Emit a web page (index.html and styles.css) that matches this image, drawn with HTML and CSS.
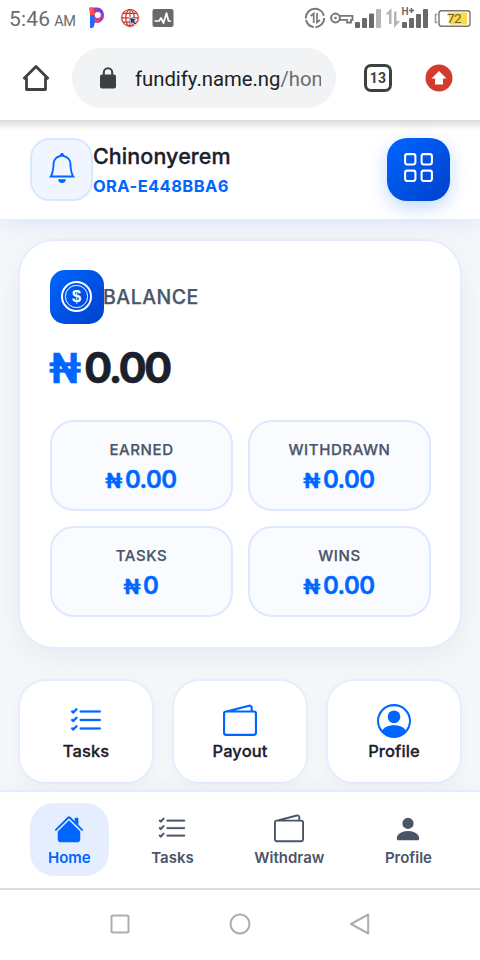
FILE: index.html
```html
<!DOCTYPE html>
<html lang="en">
<head>
<meta charset="utf-8">
<meta name="viewport" content="width=device-width">
<title>Fundify</title>
<link rel="stylesheet" href="styles.css">
</head>
<body>
<svg class="defs" width="0" height="0">
  <symbol id="list" viewBox="0 0 16 16"><path d="M5 11.5a.5.5 0 0 1 .5-.5h9a.5.5 0 0 1 0 1h-9a.5.5 0 0 1-.5-.5zm0-4a.5.5 0 0 1 .5-.5h9a.5.5 0 0 1 0 1h-9a.5.5 0 0 1-.5-.5zm0-4a.5.5 0 0 1 .5-.5h9a.5.5 0 0 1 0 1h-9a.5.5 0 0 1-.5-.5zM3.854 2.146a.5.5 0 0 1 0 .708l-1.5 1.5a.5.5 0 0 1-.708 0l-.5-.5a.5.5 0 1 1 .708-.708L2 3.293l1.146-1.147a.5.5 0 0 1 .708 0zm0 4a.5.5 0 0 1 0 .708l-1.5 1.5a.5.5 0 0 1-.708 0l-.5-.5a.5.5 0 1 1 .708-.708L2 7.293l1.146-1.147a.5.5 0 0 1 .708 0zm0 4a.5.5 0 0 1 0 .708l-1.5 1.5a.5.5 0 0 1-.708 0l-.5-.5a.5.5 0 0 1 .708-.708l.146.147 1.146-1.147a.5.5 0 0 1 .708 0z" stroke="currentColor" stroke-width=".12"/></symbol>
  <symbol id="wallet" viewBox="0 0 16 16"><path d="M12.136.326A1.5 1.5 0 0 1 14 1.78V3h.5A1.5 1.5 0 0 1 16 4.5v9a1.5 1.5 0 0 1-1.5 1.5h-13A1.5 1.5 0 0 1 0 13.5v-9a1.5 1.5 0 0 1 1.432-1.499L12.136.326zM5.562 3H13V1.78a.5.5 0 0 0-.621-.484L5.562 3zM1.5 4a.5.5 0 0 0-.5.5v9a.5.5 0 0 0 .5.5h13a.5.5 0 0 0 .5-.5v-9a.5.5 0 0 0-.5-.5h-13z"/></symbol>
</svg>

<header class="status">
  <span class="time">5:46<small>AM</small></span>
  <svg class="s-p" width="18" height="22" viewBox="0 0 18 22">
    <defs><linearGradient id="pg" x1="0" y1="1" x2="1" y2="0"><stop offset="0" stop-color="#ff5a48"/><stop offset=".45" stop-color="#c83d9a"/><stop offset="1" stop-color="#4a3df5"/></linearGradient></defs>
    <path d="M1 .5h8a8 8 0 0 1 0 15.500H5V8H1z" fill="url(#pg)"/>
    <path d="M0 .5h4l2 7.500H1z" fill="#ff5548"/>
    <path d="M1 8h4.500v9q0 3-2.500 4H1z" fill="#1f6bff"/>
    <circle cx="8.800" cy="8" r="3" fill="#fff"/>
  </svg>
  <svg class="s-globe" width="20" height="20" viewBox="0 0 20 20">
    <circle cx="10" cy="10.500" r="9.300" fill="#fff" stroke="#ddd" stroke-width=".8"/>
    <g fill="none" stroke="#c9352b" stroke-width="1.200"><circle cx="10" cy="9.800" r="8.300"/><ellipse cx="10" cy="9.800" rx="4.200" ry="8.300"/><path d="M10 1.500v16.600M1.700 9.800h16.600M3 5.400h14M3 14.200h14"/></g>
    <path d="M9.500 9l7 2.500-2.300 1.500 2.300 2.500-1.500 1.500-2.300-2.500-1.500 2.300z" fill="#24357c" stroke="#fff" stroke-width=".7"/>
  </svg>
  <svg class="s-wave" width="22" height="18" viewBox="0 0 22 18"><rect x=".5" width="21" height="18" rx="2" fill="#696969"/><path d="M2.500 12H7l2-3 2.500 5L14.500 4l2 8H19" fill="none" stroke="#fff" stroke-width="1.700" stroke-linejoin="round"/></svg>
  <span class="spacer"></span>
  <svg width="176" height="24" viewBox="0 0 176 24">
    <g fill="none" stroke="#777" stroke-width="2">
      <circle cx="11" cy="12" r="9.200" stroke-dasharray="14 1.600 11 1.600 27 2.600"/>
      <path d="M9.700 17V7.500l-3 2.500M13 7v9.500l3-2.500" stroke-width="1.700"/>
      <circle cx="31.500" cy="12" r="4.400"/><path d="M35.300 9.800H48.500v4H47v2.700h-4v-2.700H35.300" stroke-width="1.800"/>
    </g>
    <circle cx="31.500" cy="12" r="1.300" fill="#777"/>
    <g fill="#696969"><rect x="51" y="16" width="5" height="6" rx="1"/><rect x="58" y="12" width="5" height="10" rx="1"/><rect x="65" y="7.500" width="5" height="14.500" rx="1"/></g>
    <rect x="72" y="3" width="5" height="19" rx="1" fill="#b5b5b5"/>
    <path d="M87.500 2v16H85V8.500h-3.500zM90 22V5.500h2.500V15H96z" fill="#b5b5b5"/>
    <text x="97.500" y="9" class="hplus">H</text><path d="M105 4.500h5M107.500 2v5" stroke="#696969" stroke-width="1.600"/>
    <g fill="#696969"><rect x="98" y="16" width="5" height="6" rx="1"/><rect x="105" y="12" width="5" height="10" rx="1"/><rect x="112" y="8" width="5" height="14" rx="1"/><rect x="119" y="3" width="5" height="19" rx="1"/></g>
    <path d="M133.500 8.500h-2v8h2" fill="none" stroke="#999" stroke-width="1.500"/><rect x="135" y="4.700" width="31" height="15.600" rx="2.500" fill="#fff" stroke="#777" stroke-width="1.400"/><path d="M144 6.500h19v12h-17z" fill="#ffda48"/><text x="143" y="16.500" class="batt">72</text>
  </svg>
</header>

<div class="browser">
  <svg class="b-home" width="30" height="30" viewBox="0 0 30 30"><path d="M5.500 14.500V26.500H24.500V14.500M2.500 16L15 3.500 27.500 16" fill="none" stroke="#3c4043" stroke-width="2.800" stroke-linejoin="round"/></svg>
  <div class="url">
    <svg width="16" height="22" viewBox="0 0 16 22"><path d="M3.800 9V5.500a4.200 4.200 0 0 1 8.400 0V9" fill="none" stroke="#3c4043" stroke-width="2"/><rect y="7.500" width="16" height="14" rx="2" fill="#3c4043"/></svg>
    <div class="address">fundify.name.ng<span>/hom</span></div>
  </div>
  <div class="tabs">13</div>
  <svg class="update" width="28" height="28" viewBox="0 0 28 28"><circle cx="14" cy="14" r="13.500" fill="#d33b2d"/><path d="M14 7l7.500 7.500H18V20.500h-8V14.500H6.500z" fill="#fff"/></svg>
</div>

<div class="page">
  <div class="topbar">
    <div class="bell"><svg width="30" height="30" viewBox="0 0 16 16"><path d="M8 16a2 2 0 0 0 2-2H6a2 2 0 0 0 2 2zM8 1.918l-.797.161A4.002 4.002 0 0 0 4 6c0 .628-.134 2.197-.459 3.742-.16.767-.376 1.566-.663 2.258h10.244c-.287-.692-.502-1.490-.663-2.258C12.134 8.197 12 6.628 12 6a4.002 4.002 0 0 0-3.203-3.920L8 1.917zM14.220 12c.223.447.481.801.78 1H1c.299-.199.557-.553.78-1C2.680 10.200 3 6.880 3 6c0-2.420 1.720-4.440 4.005-4.901a1 1 0 1 1 1.990 0A5.002 5.002 0 0 1 13 6c0 .88.32 4.200 1.220 6z"/></svg></div>
    <div class="user"><div class="name">Chinonyerem</div><div class="uid">ORA-E448BBA6</div></div>
    <div class="menu"><svg width="33" height="33" viewBox="0 0 16 16"><g fill="none" stroke="#fff"><rect x="1.500" y="1.500" width="5" height="5" rx="1"/><rect x="9.500" y="1.500" width="5" height="5" rx="1"/><rect x="1.500" y="9.500" width="5" height="5" rx="1"/><rect x="9.500" y="9.500" width="5" height="5" rx="1"/></g></svg></div>
  </div>

  <main>
    <section class="balance">
      <div class="b-head">
        <div class="coin"><svg width="31" height="31" viewBox="0 0 16 16"><g fill="none" stroke="#fff"><circle cx="8" cy="8" r="7.500"/><circle cx="8" cy="8" r="5.750" stroke-width=".5"/></g><text x="8" y="11" class="dollar">$</text></svg></div>
        <span>BALANCE</span>
      </div>
      <div class="amount"><i>₦</i><span>0.00</span></div>
      <div class="stats">
        <div class="stat"><label>EARNED</label><b><i>₦</i>0.00</b></div>
        <div class="stat"><label>WITHDRAWN</label><b><i>₦</i>0.00</b></div>
        <div class="stat"><label>TASKS</label><b><i>₦</i>0</b></div>
        <div class="stat"><label>WINS</label><b><i>₦</i>0.00</b></div>
      </div>
    </section>
    <section class="actions">
      <div class="action"><svg width="34" height="34"><use href="#list"/></svg>Tasks</div>
      <div class="action"><svg width="34" height="34"><use href="#wallet"/></svg>Payout</div>
      <div class="action"><svg width="34" height="34" viewBox="0 0 16 16"><path d="M11 6a3 3 0 1 1-6 0 3 3 0 0 1 6 0z"/><path fill-rule="evenodd" d="M0 8a8 8 0 1 1 16 0A8 8 0 0 1 0 8zm8-7a7 7 0 0 0-5.468 11.370C3.242 11.226 4.805 10 8 10s4.757 1.225 5.468 2.370A7 7 0 0 0 8 1z"/></svg>Profile</div>
    </section>
  </main>

  <nav class="bottom">
    <div class="tab active"><svg width="30" height="30" viewBox="0 0 16 16"><path d="m8 3.293 6 6V13.500a1.500 1.500 0 0 1-1.500 1.500h-9A1.500 1.500 0 0 1 2 13.500V9.293l6-6zm5-.793V6l-2-2V2.500a.5.5 0 0 1 .5-.5h1a.5.5 0 0 1 .5.5z"/><path d="M7.293 1.500a1 1 0 0 1 1.414 0l6.647 6.646a.5.5 0 0 1-.708.708L8 2.207 1.354 8.854a.5.5 0 1 1-.708-.708L7.293 1.500z"/></svg>Home</div>
    <div class="tab"><svg width="30" height="30"><use href="#list"/></svg>Tasks</div>
    <div class="tab"><svg width="30" height="30"><use href="#wallet"/></svg>Withdraw</div>
    <div class="tab"><svg width="30" height="30" viewBox="0 0 16 16"><path d="M3 14s-1 0-1-1 1-4 6-4 6 3 6 4-1 1-1 1H3zm5-6a3 3 0 1 0 0-6 3 3 0 0 0 0 6z"/></svg>Profile</div>
  </nav>
</div>

<footer class="system">
  <svg width="22" height="22" viewBox="0 0 22 22"><rect x="2.500" y="2.500" width="17" height="17" rx="1.500"/></svg>
  <svg width="22" height="22" viewBox="0 0 22 22"><circle cx="11" cy="11" r="9.500"/></svg>
  <svg width="22" height="22" viewBox="0 0 22 22"><path d="M2 11L19.200 1.500v19z"/></svg>
</footer>
</body>
</html>
```
FILE: styles.css
```css
* { box-sizing: border-box; }
body { margin: 0; width: 480px; height: 960px; overflow: hidden; background: #fff; font-family: Inter, "Liberation Sans", sans-serif; display: flex; flex-direction: column; }
svg { display: block; flex: none; fill: currentColor; }
.defs { position: absolute; }
i { font-style: normal; }

.status { height: 36px; flex: none; display: flex; align-items: center; padding: 0 8px 0 9px; color: #6b6b6b; font-family: Roboto, sans-serif; }
.time { display: flex; align-items: baseline; gap: 4px; width: 80px; font-size: 21px; letter-spacing: .2px; white-space: nowrap; padding-top: 2px; }
.time small { font-size: 14.5px; letter-spacing: -.5px; }
.s-globe { margin-left: 13px; }
.s-wave { margin-left: 12px; }
.spacer { flex: 1; }
.status > svg:last-child { margin: 0 -8px 0 0; }
.hplus { font: 700 10px Roboto, sans-serif; fill: #696969; }
.batt { font: 13.5px Roboto, sans-serif; fill: #66603f; letter-spacing: -.5px; }

.browser { height: 84px; flex: none; display: flex; align-items: center; padding: 0 26px 0 22px; }
.b-home { margin: 0 21px 0 -1px; }
.url { width: 264px; height: 60px; margin-right: 28px; border-radius: 30px; background: #f1f3f4; display: flex; align-items: center; padding-left: 28px; gap: 19px; color: #3c4043; }
.address { width: 186px; overflow: hidden; white-space: nowrap; font: 20.3px/30px Roboto, sans-serif; color: #202124; padding-top: 1px; }
.address span { color: #6a6d70; }
.tabs { width: 28px; height: 28px; border: 3px solid #3c4043; border-radius: 7px; font: 700 14px/22px Roboto, sans-serif; text-align: center; color: #3c4043; letter-spacing: .3px; }
.update { margin-left: 33px; }

.page { position: relative; height: 768px; flex: none; overflow: hidden; background: #f5f7fb; display: flex; flex-direction: column; }
.page::before { content: ""; position: absolute; z-index: 4; inset: 0 0 auto; height: 10px; background: linear-gradient(#d9d9d9, rgba(255,255,255,0)); }
.topbar { position: relative; z-index: 1; height: 100px; flex: none; background: #fff; border-bottom: 1px solid #e3edff; box-shadow: 0 4px 20px rgba(0,82,220,.1); display: flex; align-items: center; padding: 0 30px; }
.bell { width: 63px; height: 63px; border: 2px solid #d9e7ff; border-radius: 20px; background: #f0f5ff; color: #0066ff; display: grid; place-items: center; padding-bottom: 3px; }
.user { flex: 1; }
.name { font-size: 21.500px; font-weight: 500; line-height: 28px; letter-spacing: .08px; color: #1a202c; -webkit-text-stroke: .3px #1a202c; }
.uid { font-size: 16.500px; font-weight: 700; line-height: 24px; margin-top: 4px; letter-spacing: .4px; color: #0066ff; }
.menu { width: 63px; height: 63px; border-radius: 20px; background: linear-gradient(135deg, #0066ff, #0040cc); box-shadow: 0 6px 18px rgba(0,102,255,.25); display: grid; place-items: center; padding-bottom: 4px; }

main { padding: 19px 18px 0; }
.balance { height: 410px; background: #fff; border: 2px solid #e4eeff; border-radius: 36px; padding: 29px 30px; box-shadow: 0 10px 30px rgba(0,0,0,.055); }
.b-head { display: flex; align-items: center; font-size: 19.500px; font-weight: 500; letter-spacing: .5px; color: #4a5568; -webkit-text-stroke: .25px #4a5568; }
.b-head span { margin-left: -1px; }
.coin { width: 54px; height: 54px; border-radius: 15px; background: linear-gradient(135deg, #0066ff, #0040cc); display: grid; place-items: center; padding: 0 1px 2px 0; -webkit-text-stroke: 0; }
.dollar { font: 700 8.500px "Liberation Sans", sans-serif; fill: #fff; text-anchor: middle; letter-spacing: 0; }
.amount { display: flex; align-items: baseline; height: 54px; margin-top: 17px; line-height: 54px; font-size: 42px; font-weight: 700; letter-spacing: -2.700px; color: #1a202c; }
.amount span { -webkit-text-stroke: .5px #1a202c; }
.amount i { width: 35px; margin-left: -1px; color: #0066ff; letter-spacing: 0; font-family: Roboto, sans-serif; font-weight: 700; display: inline-block; transform: scaleX(.94); transform-origin: 0 50%; -webkit-text-stroke: .5px #0066ff; }
.stats { display: grid; grid-template-columns: 183px 183px; gap: 15px; margin-top: 25px; }
.stat { height: 91px; border: 2px solid #dde9ff; border-radius: 24px; background: #f9fbff; text-align: center; padding-top: 17px; }
.stat label { display: block; font-size: 15px; font-weight: 500; line-height: 22px; letter-spacing: .6px; color: #4a5568; -webkit-text-stroke: .25px #4a5568; }
.stat b { display: block; font-size: 24px; font-weight: 600; line-height: 30px; margin-top: 4px; color: #0066ff; letter-spacing: -.5px; -webkit-text-stroke: .4px #0066ff; }
.stat i { display: inline-block; font: 700 21px/20px Roboto, sans-serif; margin: 0 3px 0 -1px; }
.actions { display: grid; grid-template-columns: repeat(3, 1fr); gap: 18px; margin-top: 30px; }
.action { height: 105px; background: #fff; border: 2px solid #e4eeff; border-radius: 28px; box-shadow: 0 4px 16px rgba(0,0,0,.03); display: flex; flex-direction: column; align-items: center; padding-top: 23px; font-size: 16.500px; font-weight: 500; letter-spacing: .1px; line-height: 26px; color: #1a202c; -webkit-text-stroke: .3px #1a202c; }
.action svg { color: #0066ff; }

.bottom { position: absolute; z-index: 2; inset: auto 0 0; height: 98px; background: #fff; border-top: 2px solid #e3edff; box-shadow: 0 -4px 20px rgba(0,0,0,.03); display: flex; justify-content: space-between; padding: 11px 30px 0; }
.tab { height: 73px; padding: 11px 18px 0; border-radius: 24px; display: flex; flex-direction: column; align-items: center; font-size: 15px; font-weight: 600; line-height: 24px; color: #4a5568; }
.tab svg { margin-bottom: 2px; }
.active { background: #e5eeff; color: #0066ff; }

.system { height: 72px; border-top: 2px solid #dedede; display: flex; justify-content: center; align-items: center; gap: 98px; padding-bottom: 2px; color: #adadad; }
.system svg { fill: none; stroke: #adadad; stroke-width: 2; stroke-linejoin: round; }
```
